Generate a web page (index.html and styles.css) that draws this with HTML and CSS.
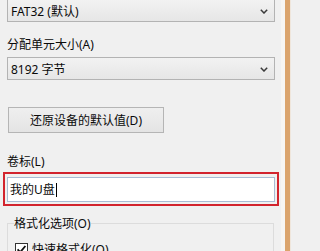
FILE: index.html
```html
<!DOCTYPE html>
<html lang="zh-CN">
<head>
<meta charset="utf-8">
<title>格式化</title>
<link rel="stylesheet" href="styles.css">
</head>
<body>
<div class="window">
  <div class="content">
    <div class="combo combo-first">
      <span class="combo-text">FAT32 (默认)</span>
      <svg class="chev" width="8" height="5" viewBox="0 0 8 5"><path d="M0.8 0.8 L4 4 L7.2 0.8" fill="none" stroke="#3a3a3a" stroke-width="1.5"/></svg>
    </div>
    <div class="label label-alloc">分配单元大小(A)</div>
    <div class="combo combo-second">
      <span class="combo-text">8192 字节</span>
      <svg class="chev" width="8" height="5" viewBox="0 0 8 5"><path d="M0.8 0.8 L4 4 L7.2 0.8" fill="none" stroke="#3a3a3a" stroke-width="1.5"/></svg>
    </div>
    <div class="btn">还原设备的默认值(D)</div>
    <div class="label label-vol">卷标(L)</div>
    <div class="highlight">
      <div class="input"><span>我的U盘</span><span class="caret"></span></div>
    </div>
    <fieldset class="group">
      <legend class="legend">格式化选项(O)</legend>
      <div class="check-row">
        <svg class="check" width="13" height="13" viewBox="0 0 13 13"><rect x="0.5" y="0.5" width="12" height="12" fill="#fff" stroke="#333"/><path d="M2.6 6.4 L5.2 9.2 L10.4 3" fill="none" stroke="#111" stroke-width="1.8"/></svg>
        <span class="check-text">快速格式化(Q)</span>
      </div>
    </fieldset>
  </div>
  <div class="edge-light"></div>
  <div class="edge-orange"></div>
  <div class="edge-rest"></div>
</div>
</body>
</html>
```
FILE: styles.css
```css
html, body {
  margin: 0;
  padding: 0;
  background: #f0f0f0;
  overflow: hidden;
}
body {
  font-family: "Noto Sans", "Noto Sans CJK SC", sans-serif;
  font-size: 12px;
  color: #0a0a0a;
}
.window {
  display: flex;
  width: 291px;
  height: 251px;
  overflow: hidden;
}
.content {
  width: 281px;
  display: flex;
  flex-direction: column;
  align-items: flex-start;
}
.content > * {
  flex: none;
}
.edge-light {
  width: 4px;
  background: #f7f5f2;
}
.edge-orange {
  width: 5px;
  background: #dba46c;
}
.edge-rest {
  width: 1px;
  background: #efe6dc;
}
.combo {
  box-sizing: border-box;
  margin-left: 7px;
  width: 268px;
  height: 23px;
  border: 1px solid #b3b3b3;
  background: linear-gradient(#f2f2f2, #e6e6e6);
  display: flex;
  align-items: center;
  justify-content: space-between;
  padding: 0 6px 0 3px;
}
.combo-first {
  margin-top: -1px;
}
.combo-second {
  margin-top: 5px;
}
.combo-text {
  line-height: 15px;
  padding-top: 1px;
}
.chev {
  display: block;
  margin-top: 1px;
}
.label {
  margin-left: 7px;
  line-height: 15px;
}
.label-alloc {
  margin-top: 15px;
}
.label-vol {
  margin-top: 21px;
}
.btn {
  box-sizing: border-box;
  margin-top: 27px;
  margin-left: 8px;
  width: 156px;
  height: 26px;
  border: 1px solid #b5b5b5;
  background: linear-gradient(#efefef, #e4e4e4);
  display: flex;
  align-items: center;
  justify-content: center;
  line-height: 15px;
}
.highlight {
  box-sizing: border-box;
  margin-top: 3px;
  margin-left: 3px;
  width: 276px;
  border: 2px solid #d2242e;
  padding: 3px 2px 2px 2px;
}
.input {
  box-sizing: border-box;
  height: 25px;
  border: 1px solid #a9bcd4;
  background: #ffffff;
  display: flex;
  align-items: center;
  padding-left: 2px;
  line-height: 15px;
}
.caret {
  width: 1px;
  height: 14px;
  background: #000;
  margin-left: 1px;
}
.group {
  box-sizing: border-box;
  margin: 10px 0 0 7px;
  width: 267px;
  border: 1px solid #dcdcdc;
  padding: 0 7px 10px 7px;
  min-width: 0;
}
.legend {
  padding: 0;
  margin-left: -1px;
  line-height: 15px;
}
.check-row {
  display: flex;
  align-items: center;
  margin-top: 11px;
  gap: 4px;
}
.check {
  display: block;
  flex: none;
}
.check-text {
  line-height: 15px;
}
```
